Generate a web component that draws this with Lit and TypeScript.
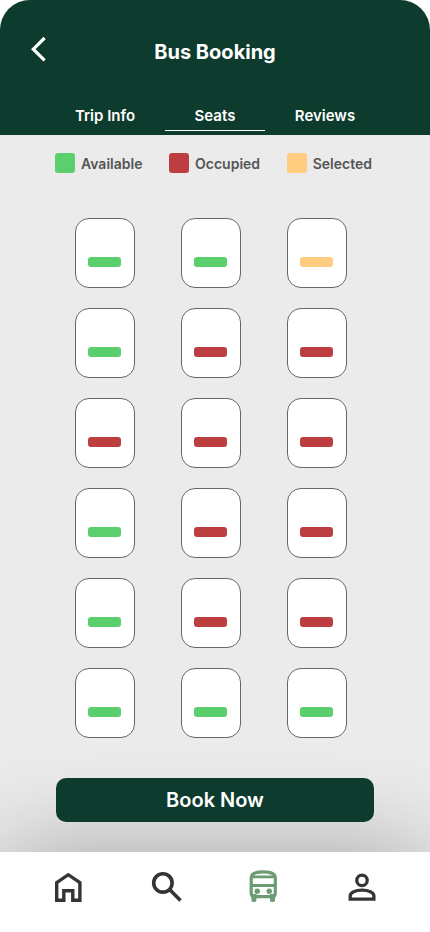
import { LitElement, html, css, svg } from "lit";
import { customElement, state } from "lit/decorators.js";
import { classMap } from "lit/directives/class-map.js";

type SeatStatus = "available" | "occupied" | "selected";

const LEGEND: { status: SeatStatus; label: string }[] = [
  { status: "available", label: "Available" },
  { status: "occupied", label: "Occupied" },
  { status: "selected", label: "Selected" },
];

const A: SeatStatus = "available";
const O: SeatStatus = "occupied";
const S: SeatStatus = "selected";

const TABS = ["Trip Info", "Seats", "Reviews"];

const NAV = [
  {
    label: "Home",
    icon: svg`<path fill="none" stroke="currentColor" stroke-width="3.4"
      d="M8.700 33.300V15.600L20.300 7.700L31.900 15.600V33.300H24.800V23.800H15.800V33.300Z"/>`,
  },
  {
    label: "Search",
    icon: svg`<g fill="none" stroke="currentColor" stroke-width="3.6">
      <circle cx="16.900" cy="15.900" r="9.200"/><path d="M23.600 22.600L34.500 33.500"/></g>`,
  },
  {
    label: "Buses",
    icon: svg`<path fill="none" stroke="currentColor" stroke-width="3.2" stroke-linejoin="round"
        d="M7.200 11C7.200 6.500 11 4.900 19.300 4.900S31.300 6.500 31.300 11V26C31.300 29 30 29.700 28 29.700H10.500C8.500 29.700 7.200 29 7.200 26Z"/>
      <path fill="none" stroke="currentColor" stroke-width="2.800" d="M7.500 9.900H31M7.500 18.500H31"/>
      <circle cx="13.200" cy="24.200" r="2.700" fill="currentColor"/>
      <circle cx="25.200" cy="24.200" r="2.700" fill="currentColor"/>
      <path fill="currentColor" d="M7.400 27H12.400V33.200Q12.400 35 10.700 35H9.100Q7.400 35 7.400 33.200ZM26 27H31V33.200Q31 35 29.300 35H27.700Q26 35 26 33.200Z"/>`,
  },
  {
    label: "Profile",
    icon: svg`<g fill="none" stroke="currentColor" stroke-width="3.3">
      <circle cx="20" cy="13.400" r="5.200"/>
      <path d="M8.200 32.100V29C8.200 25.500 13.500 23.200 20 23.200S31.900 25.500 31.900 29V32.100Z"/></g>`,
  },
];

@customElement("app-root")
export class AppRoot extends LitElement {
  @state() private seats: SeatStatus[] = [
    A, A, S,
    A, O, O,
    O, O, O,
    A, O, O,
    A, O, O,
    A, A, A,
  ];
  @state() private tab = "Seats";

  static styles = css`
    :host {
      display: flex;
      flex-direction: column;
      min-height: 100vh;
      overflow: hidden;
      border-radius: 30px 30px 0 0;
      background: #ebebeb;
      font-family: Inter, "Liberation Sans", sans-serif;
      --green: #0d3b2e;
      --available: #5bcf6b;
      --occupied: #bc3e40;
      --selected: #fecd7f;
    }
    * {
      box-sizing: border-box;
    }
    button {
      padding: 0;
      border: 0;
      background: none;
      font: inherit;
      cursor: pointer;
    }
    .header {
      background: var(--green);
      color: #fff;
      padding: 32px 30px 4px;
    }
    .bar {
      display: grid;
      grid-template-columns: 40px 1fr 40px;
      align-items: center;
      height: 40px;
    }
    .back {
      display: flex;
      height: 40px;
      color: #fff;
    }
    .title {
      margin: 0;
      font-size: 20px;
      line-height: 24px;
      font-weight: 700;
      text-align: center;
    }
    .tabs {
      display: flex;
      justify-content: center;
      gap: 10px;
      padding-top: 33px;
    }
    .tab {
      flex: 0 1 100px;
      height: 26px;
      padding-bottom: 4px;
      border-bottom: 1px solid transparent;
      color: #fff;
      font-size: 15px;
      line-height: 20px;
      font-weight: 600;
    }
    .tab.active {
      border-color: #fff;
    }
    .legend {
      display: flex;
      justify-content: space-between;
      margin: 0;
      padding: 18px 58px 45px 55px;
      list-style: none;
    }
    .key {
      display: flex;
      gap: 6px;
      color: #555;
      font-size: 14px;
      line-height: 22px;
      height: 20px;
      font-weight: 600;
    }
    .swatch {
      width: 20px;
      height: 20px;
      border-radius: 3px;
    }
    .seats {
      display: grid;
      grid-template-columns: repeat(3, 60px);
      justify-content: space-between;
      row-gap: 20px;
      padding: 0 83px 40px 75px;
    }
    .seat {
      display: flex;
      height: 70px;
      padding: 38px 12px 0;
      border: 1px solid #666;
      border-radius: 14px;
      background: #fff;
    }
    .mark {
      width: 33px;
      height: 10px;
      border-radius: 3px;
    }
    .available {
      background: var(--available);
    }
    .occupied {
      background: var(--occupied);
    }
    .selected {
      background: var(--selected);
    }
    .book {
      position: relative;
      z-index: 1;
      height: 44px;
      margin: 0 56px 30px;
      border-radius: 10px;
      background: var(--green);
      color: #fff;
      font-size: 20px;
      line-height: 24px;
      font-weight: 600;
    }
    .nav {
      display: flex;
      justify-content: space-between;
      height: 80px;
      margin-top: auto;
      padding: 15px 48px 0;
      background: #fff;
      box-shadow: 0 4px 100px rgba(0, 0, 0, 0.35);
    }
    .link {
      height: 40px;
      color: #353535;
    }
    .link.active {
      color: #6c9c74;
    }
    svg {
      display: block;
    }
  `;

  private toggle(index: number) {
    this.seats = this.seats.map((s, i) =>
      i !== index || s === O ? s : s === S ? A : S
    );
  }

  render() {
    return html`
      <header class="header">
        <div class="bar">
          <button class="back" aria-label="Back">
            <svg width="20" height="40" viewBox="0 0 20 40" fill="none" stroke="#fff" stroke-width="3.2">
              <path d="M14.600 6L3.300 17.200L14.600 28.300" />
            </svg>
          </button>
          <h1 class="title">Bus Booking</h1>
        </div>
        <nav class="tabs" aria-label="Sections">
          ${TABS.map(
            (t) => html`<button
              class=${classMap({ tab: true, active: t === this.tab })}
              @click=${() => (this.tab = t)}
            >${t}</button>`
          )}
        </nav>
      </header>
      <ul class="legend">
        ${LEGEND.map(
          (k) => html`<li class="key"><span class="swatch ${k.status}"></span>${k.label}</li>`
        )}
      </ul>
      <section class="seats" aria-label="Seats">
        ${this.seats.map(
          (s, i) => html`<button
            class="seat"
            aria-label="Seat ${i + 1}, ${s}"
            aria-pressed=${s === S ? "true" : "false"}
            @click=${() => this.toggle(i)}
          ><span class="mark ${s}"></span></button>`
        )}
      </section>
      <button class="book">Book Now</button>
      <nav class="nav" aria-label="Main">
        ${NAV.map(
          (n) => html`<a
            class=${classMap({ link: true, active: n.label === "Buses" })}
            href="#${n.label.toLowerCase()}"
            aria-label=${n.label}
          ><svg width="40" height="40" viewBox="0 0 40 40">${n.icon}</svg></a>`
        )}
      </nav>
    `;
  }
}
